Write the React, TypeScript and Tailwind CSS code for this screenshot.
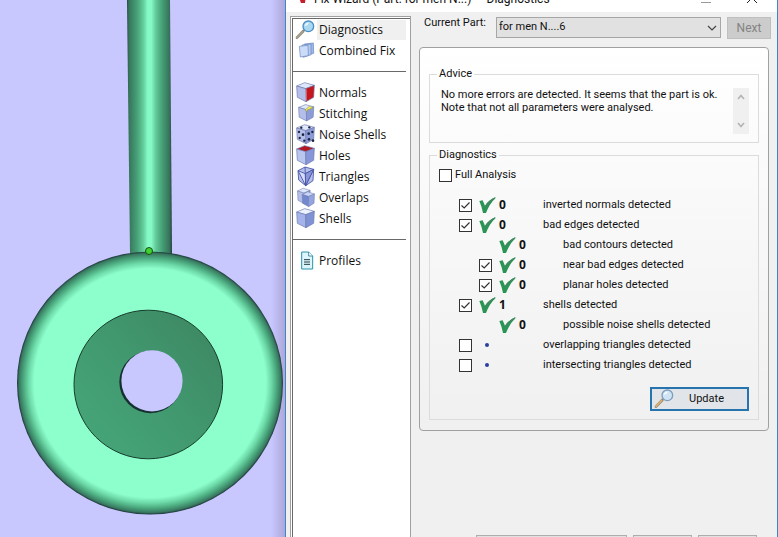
import React, { useState } from 'react';

type IconProps = { children: React.ReactNode };

const CubeFrame: React.FC<IconProps> = ({ children }) => (
    <svg viewBox="0 0 57 63" className="w-[19px] h-[21px]" aria-hidden="true" strokeLinejoin="round">
        {children}
    </svg>
);

const Cube: React.FC<{ top?: string; left?: string; right?: string }> = ({
    top = '#dfe7fa',
    left = '#b3bfea',
    right = '#8d9cd6',
}) => (
    <g stroke="#6c79ad" strokeWidth="2">
        <path d="M2 12 L26 2 L55 10 L29 20 Z" fill={top} />
        <path d="M2 12 L29 20 L30 59 L4 46 Z" fill={left} />
        <path d="M29 20 L55 10 L53 46 L30 59 Z" fill={right} />
    </g>
);

const NormalsIcon = () => (
    <CubeFrame><Cube right="#c4161c" /><path d="M30 22v34" stroke="#f3d7e4" strokeWidth="2" /></CubeFrame>
);

const StitchingIcon = () => (
    <CubeFrame>
        <g transform="translate(6 3) scale(.86)"><Cube /></g>
        <path d="M28 20 L40 10 L52 14 L34 21 L31 26 Z" fill="#f4ee55" stroke="#8b8a45" strokeWidth="1.5" />
    </CubeFrame>
);

const NoiseIcon = () => (
    <CubeFrame>
        <Cube />
        <g fill="#1d2340">
            <circle cx="16" cy="11" r="3.5" /><circle cx="40" cy="10" r="3.5" />
            <circle cx="9" cy="24" r="3.5" /><circle cx="21" cy="32" r="4" /><circle cx="11" cy="42" r="3.5" />
            <circle cx="38" cy="29" r="4" /><circle cx="49" cy="24" r="3.5" /><circle cx="39" cy="46" r="4" />
            <circle cx="25" cy="50" r="3.5" /><circle cx="51" cy="50" r="4" />
        </g>
    </CubeFrame>
);

const HolesIcon = () => (
    <CubeFrame><Cube top="#b51620" left="#b9c6f0" right="#8796d8" /></CubeFrame>
);

const TrianglesIcon = () => (
    <CubeFrame>
        <g fill="#b4bfee" stroke="#4450a0" strokeWidth="2.5">
            <path d="M6 14 L27 3 L53 10 L51 44 L29 59 L8 42 Z" />
            <path d="M6 14 L28 23 L53 10 L29 59 L6 14 M28 23 L29 59 M27 3 L28 23" fill="#d5dcfa" />
            <path d="M28 23 L53 10 L29 59 Z" fill="#8995d8" />
        </g>
    </CubeFrame>
);

const OverlapsIcon = () => (
    <CubeFrame>
        <g transform="translate(3 2) scale(.72 .82)"><Cube /></g>
        <g transform="translate(17 13) scale(.7 .78)"><Cube top="#c9d5f6" left="#7388cd" right="#93a4e0" /></g>
    </CubeFrame>
);

const ShellsIcon = () => (
    <CubeFrame><Cube top="#edf2ff" left="#a4b4ea" right="#7f92d4" /></CubeFrame>
);

const CombinedIcon = () => (
    <CubeFrame>
        <g fill="#cbdcf8" stroke="#6783bd" strokeWidth="2">
            <path d="M25 12 L52 9 L53 40 L29 48 Z" fill="#9db9ec" />
            <path d="M18 15 L45 12 L45 44 L22 52 Z" fill="#b5cbf3" />
            <path d="M10 19 L36 16 L37 47 L13 51 Z" />
        </g>
    </CubeFrame>
);

const ProfilesIcon = () => (
    <CubeFrame>
        <path d="M17 6 H38 L50 18 V57 H17 Z" fill="#dcf6fb" stroke="#2a93ac" strokeWidth="3" />
        <path d="M38 6 V18 H50" fill="#fff" stroke="#237d91" strokeWidth="2.5" />
        <path d="M24 29H42M24 36H42M24 43H42" stroke="#243b43" strokeWidth="3" />
    </CubeFrame>
);

const Magnifier: React.FC<{ handle: string; rim: string; lens: string }> = ({ handle, rim, lens }) => (
    <svg viewBox="0 0 60 60" className="w-5 h-5" aria-hidden="true">
        <path d="M6 53 L25 33" stroke="#8c8577" strokeWidth="8" strokeLinecap="round" />
        <path d="M6 52 L23 34" stroke={handle} strokeWidth="5" strokeLinecap="round" />
        <circle cx="40" cy="19" r="16" fill={lens} stroke={rim} strokeWidth="4" />
        <path d="M29 19 a11 11 0 0 1 13 -11 q-3 9 -13 11" fill="#fff" opacity=".75" />
    </svg>
);

const Tick = () => (
    <svg viewBox="0 0 51 51" className="w-[17px] h-[17px]" aria-hidden="true">
        <path d="M1 12 L11 10 L18 26 Q29 9 49 1 L49 4 Q32 20 21 48 L12 48 Q8 28 1 12 Z" fill="#2a9455" />
        <path d="M18 27 Q29 9 49 1 L48 5 Q31 16 19 36 Z" fill="#3f8a5e" />
    </svg>
);

const Dot = () => <span className="w-1 h-1 rounded-full bg-[#2a3fa0]" />;

const CheckBox: React.FC<{ id: string; checked: boolean; onChange: () => void }> = ({ id, checked, onChange }) => (
    <span className="grid w-[13px] h-[13px] shrink-0">
        <input
            id={id}
            type="checkbox"
            checked={checked}
            onChange={onChange}
            className="col-start-1 row-start-1 w-[13px] h-[13px] appearance-none border border-[#333333] bg-white"
        />
        {checked && (
            <svg viewBox="0 0 13 13" className="col-start-1 row-start-1 pointer-events-none" aria-hidden="true">
                <path d="M2.5 6.5 L5.2 9 L10.5 3.5" fill="none" stroke="#333" strokeWidth="1.2" />
            </svg>
        )}
    </span>
);

const menu = [
    [
        { name: 'Diagnostics', icon: <Magnifier handle="#aaa38e" rim="#4b8dc0" lens="#a9d8f2" /> },
        { name: 'Combined Fix', icon: <CombinedIcon /> },
    ],
    [
        { name: 'Normals', icon: <NormalsIcon /> },
        { name: 'Stitching', icon: <StitchingIcon /> },
        { name: 'Noise Shells', icon: <NoiseIcon /> },
        { name: 'Holes', icon: <HolesIcon /> },
        { name: 'Triangles', icon: <TrianglesIcon /> },
        { name: 'Overlaps', icon: <OverlapsIcon /> },
        { name: 'Shells', icon: <ShellsIcon /> },
    ],
    [{ name: 'Profiles', icon: <ProfilesIcon /> }],
];

const results = [
    { id: 'normals', label: 'inverted normals detected', count: 0, box: true, on: true, sub: false },
    { id: 'edges', label: 'bad edges detected', count: 0, box: true, on: true, sub: false },
    { id: 'contours', label: 'bad contours detected', count: 0, box: false, on: false, sub: true },
    { id: 'near', label: 'near bad edges detected', count: 0, box: true, on: true, sub: true },
    { id: 'planar', label: 'planar holes detected', count: 0, box: true, on: true, sub: true },
    { id: 'shells', label: 'shells detected', count: 1, box: true, on: true, sub: false },
    { id: 'noise', label: 'possible noise shells detected', count: 0, box: false, on: false, sub: true },
    { id: 'overlap', label: 'overlapping triangles detected', count: null, box: true, on: false, sub: false },
    { id: 'intersect', label: 'intersecting triangles detected', count: null, box: true, on: false, sub: false },
];

const Viewport = () => (
    <div className="w-[285px] shrink-0 overflow-hidden bg-[#c8c8ff]">
        <svg viewBox="0 0 285 537" className="w-[285px] h-[537px]" role="img" aria-label="3D part">
            <defs>
                <linearGradient id="rod">
                    <stop offset="0" stopColor="#24443f" />
                    <stop offset=".04" stopColor="#36735a" />
                    <stop offset=".22" stopColor="#46a077" />
                    <stop offset=".36" stopColor="#62cb99" />
                    <stop offset=".46" stopColor="#86fac6" />
                    <stop offset=".54" stopColor="#86fac6" />
                    <stop offset=".64" stopColor="#62cb99" />
                    <stop offset=".78" stopColor="#46a077" />
                    <stop offset=".95" stopColor="#357059" />
                    <stop offset="1" stopColor="#203b3c" />
                </linearGradient>
                <radialGradient id="disc">
                    <stop offset=".87" stopColor="#8dffcd" />
                    <stop offset=".91" stopColor="#6fdcaa" />
                    <stop offset=".95" stopColor="#4cab80" />
                    <stop offset=".985" stopColor="#387860" />
                    <stop offset="1" stopColor="#1c3236" />
                </radialGradient>
                <linearGradient id="face" x1="0" y1="1" x2=".9" y2=".2">
                    <stop offset="0" stopColor="#46a97a" />
                    <stop offset=".5" stopColor="#429b71" />
                    <stop offset="1" stopColor="#3e8b66" />
                </linearGradient>
                <linearGradient id="shade">
                    <stop offset="0" stopColor="#8b7fae" stopOpacity="0" />
                    <stop offset="1" stopColor="#8b7fae" stopOpacity=".45" />
                </linearGradient>
            </defs>
            <rect x="271" width="14" height="537" fill="url(#shade)" />
            <path d="M127 0 H170 L172 254 H130 Z" fill="url(#rod)" />
            <ellipse cx="150" cy="383" rx="133" ry="131.5" fill="url(#disc)" />
            <circle cx="148.3" cy="384.5" r="74.3" fill="url(#face)" stroke="#173c2c" strokeWidth="1" />
            <circle cx="150.5" cy="382" r="31.2" fill="#17302f" />
            <circle cx="152" cy="380.8" r="30.6" fill="#c8c8ff" />
            <circle cx="149" cy="251" r="3.5" fill="#3fd22f" stroke="#174d12" />
        </svg>
    </div>
);

const App: React.FC = () => {
    const [active, setActive] = useState('Diagnostics');
    const [full, setFull] = useState(false);
    const [checks, setChecks] = useState<Record<string, boolean>>(
        Object.fromEntries(results.map((r) => [r.id, r.on]))
    );

    return (
        <div className="flex h-screen overflow-hidden bg-[#f0f0f0] font-[Roboto,sans-serif] text-[11px] text-[#111111]">
            <Viewport />

            <main className="flex flex-1 min-w-0 flex-col border-x border-[#3c87c4]">
                <header className="flex h-3 shrink-0 items-end justify-between overflow-hidden bg-white pl-3 pr-5 pb-[5px]">
                    <div className="flex items-end gap-2">
                        <svg viewBox="0 0 8 12" className="w-2 h-3" aria-hidden="true">
                            <path d="M0 0 H8 L7 8 H3 Z" fill="#c3202b" />
                        </svg>
                        <h1 className="text-[12px] leading-4 whitespace-pre">Fix Wizard (Part: for men N...)  -  Diagnostics</h1>
                    </div>
                    <div className="flex items-end gap-9 pb-1">
                        <svg viewBox="0 0 10 10" className="w-[10px] h-[10px]" aria-hidden="true">
                            <path d="M0 9.5H10" stroke="#999" />
                        </svg>
                        <svg viewBox="0 0 10 10" className="w-[10px] h-[10px]" aria-hidden="true">
                            <path d="M0 0L10 10M10 0L0 10" stroke="#222" />
                        </svg>
                    </div>
                </header>

                <div className="flex flex-1 min-h-0 pt-1">
                    <nav className="ml-1 w-[121px] shrink-0 border border-b-0 border-[#a0a0a0] bg-white pl-px pt-px">
                        <div className="h-full border-l border-t border-[#696969] pr-1">
                            {menu.map((group, i) => (
                                <div key={i}>
                                    {i > 0 && (
                                        <div className="flex h-[21px] items-center">
                                            <hr className="w-full border-[#696969]" />
                                        </div>
                                    )}
                                    {group.map(({ name, icon }) => (
                                        <button
                                            key={name}
                                            onClick={() => setActive(name)}
                                            className="flex h-[21px] w-full items-center text-left font-['Open_Sans',sans-serif] text-[12px]"
                                        >
                                            <span className="flex w-6 shrink-0 justify-center">{icon}</span>
                                            <span className={name === active ? 'flex-1 bg-[#f0f0f0] px-0.5 leading-5' : 'flex-1 px-0.5 leading-5'}>
                                                {name}
                                            </span>
                                        </button>
                                    ))}
                                </div>
                            ))}
                        </div>
                    </nav>

                    <section className="flex flex-1 min-w-0 flex-col justify-between px-2">
                        <div>
                            <div className="flex items-start pl-[5px] pt-px">
                                <label htmlFor="part" className="w-[72px] shrink-0 leading-3">Current Part:</label>
                                <div className="grid flex-1 items-center">
                                    <select
                                        id="part"
                                        className="col-start-1 row-start-1 h-[21px] appearance-none border border-[#a6a6a6] bg-[#e1e1e1] px-0.5"
                                    >
                                        <option>for men N....6</option>
                                    </select>
                                    <svg viewBox="0 0 10 6" className="pointer-events-none col-start-1 row-start-1 mr-1 h-[6px] w-[10px] justify-self-end" aria-hidden="true">
                                        <path d="M1 1L5 5L9 1" fill="none" stroke="#444" strokeWidth="1.2" />
                                    </svg>
                                </div>
                                <button disabled className="-mr-0.5 ml-1.5 h-[22px] w-11 border border-[#bfbfbf] bg-[#cccccc] text-[12px] text-[#838383]">
                                    Next
                                </button>
                            </div>

                            <div className="mt-2 rounded-[4px] border border-[#a0a0a0] bg-linear-to-b from-white to-[#f0f0f0] px-[9px] pb-2.5 pt-[18px]">
                                <fieldset className="border border-[#dcdcdc] pb-2 pl-[11px] pr-[9px]">
                                    <legend className="-ml-1 px-0.5 leading-4">Advice</legend>
                                    <div className="flex justify-between pt-1.5">
                                        <p className="leading-[13px]">
                                            No more errors are detected. It seems that the part is ok.
                                            <br />
                                            Note that not all parameters were analysed.
                                        </p>
                                        <div className="flex h-[46px] w-4 shrink-0 flex-col items-center justify-between bg-[#f0f0f0] py-1.5">
                                            <svg viewBox="0 0 8 6" className="w-2 h-1.5" aria-hidden="true">
                                                <path d="M1 5L4 1.5L7 5" fill="none" stroke="#b5b5b5" strokeWidth="1.7" />
                                            </svg>
                                            <svg viewBox="0 0 8 6" className="w-2 h-1.5" aria-hidden="true">
                                                <path d="M1 1L4 4.5L7 1" fill="none" stroke="#b5b5b5" strokeWidth="1.7" />
                                            </svg>
                                        </div>
                                    </div>
                                </fieldset>

                                <fieldset className="mt-1 border border-[#dcdcdc] pb-2 pl-[9px] pr-[9px]">
                                    <legend className="-ml-0.5 px-0.5 leading-4">Diagnostics</legend>
                                    <div className="flex h-6 items-center gap-[3px]">
                                        <CheckBox id="full" checked={full} onChange={() => setFull(!full)} />
                                        <label htmlFor="full">Full Analysis</label>
                                    </div>
                                    <ul className="mt-2 pl-5">
                                        {results.map((r) => (
                                            <li key={r.id} className={r.sub ? 'flex h-5 items-center pl-5' : 'flex h-5 items-center'}>
                                                <span className="flex w-[18px] shrink-0">
                                                    {r.box && (
                                                        <CheckBox
                                                            id={r.id}
                                                            checked={checks[r.id]}
                                                            onChange={() => setChecks({ ...checks, [r.id]: !checks[r.id] })}
                                                        />
                                                    )}
                                                </span>
                                                <span className="flex w-5 shrink-0 justify-center">
                                                    {r.count === null ? <Dot /> : <Tick />}
                                                </span>
                                                <b className="w-[46px] shrink-0 pl-0.5 font-['Open_Sans',sans-serif] text-[12px]">{r.count}</b>
                                                <label htmlFor={r.box ? r.id : undefined}>{r.label}</label>
                                            </li>
                                        ))}
                                    </ul>
                                    <div className="mt-3 flex justify-end">
                                        <button className="flex h-6 w-[99px] items-center border-2 border-[#2674ad] bg-[#e1e4e8] pl-0.5">
                                            <Magnifier handle="#dcb069" rim="#7f9dbc" lens="#cfe5f6" />
                                            <span className="flex-1 pr-2 text-center">Update</span>
                                        </button>
                                    </div>
                                </fieldset>
                            </div>
                        </div>

                        <footer className="flex h-0.5 justify-end gap-1.5 overflow-hidden pr-3">
                            <button aria-label="Help" className="h-6 w-[151px] shrink-0 border border-[#adadad] bg-[#e1e1e1]" />
                            <button aria-label="Apply" className="h-6 w-[59px] shrink-0 border border-[#adadad] bg-[#e1e1e1]" />
                            <button aria-label="Close" className="h-6 w-[59px] shrink-0 border border-[#adadad] bg-[#e1e1e1]" />
                        </footer>
                    </section>
                </div>
            </main>
        </div>
    );
};

export default App;
